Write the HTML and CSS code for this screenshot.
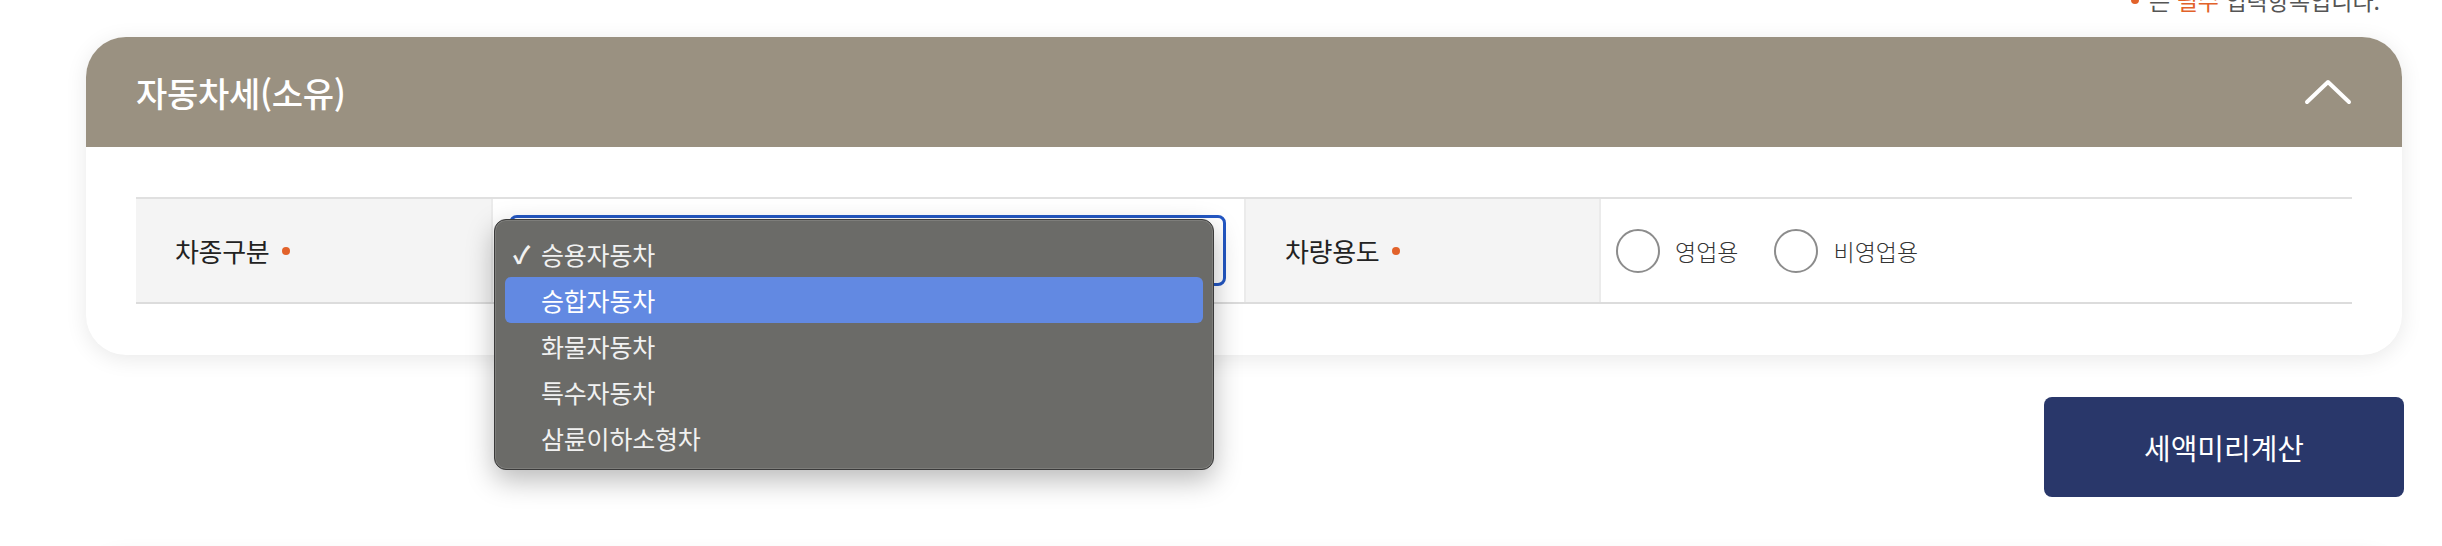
FILE: index.html
```html
<!DOCTYPE html>
<html lang="ko">
<head>
<meta charset="utf-8">
<title>자동차세(소유)</title>
<link rel="stylesheet" href="styles.css">
</head>
<body>
<div class="page">
  <div class="notice">
    <p class="notice-text"><span class="req-dot"></span> 는 <em>필수</em> 입력항목입니다.</p>
  </div>

  <section class="card">
    <header class="card-head">
      <h2 class="card-title">자동차세(소유)</h2>
      <svg class="chevron" width="48" height="26" viewBox="0 0 48 26" aria-hidden="true">
        <polyline points="3,23 24,3 45,23" fill="none" stroke="#ffffff" stroke-width="4" stroke-linecap="round" stroke-linejoin="round"/>
      </svg>
    </header>

    <div class="card-body">
      <div class="form-grid">
        <div class="cell label-cell">차종구분<span class="req-dot"></span></div>
        <div class="cell select-cell">
          <div class="select-box"></div>
          <ul class="popup">
            <li class="opt checked"><span class="check">✓</span>승용자동차</li>
            <li class="opt active">승합자동차</li>
            <li class="opt">화물자동차</li>
            <li class="opt">특수자동차</li>
            <li class="opt">삼륜이하소형차</li>
          </ul>
        </div>
        <div class="cell label-cell bordered">차량용도<span class="req-dot"></span></div>
        <div class="cell radio-cell bordered">
          <label class="radio"><span class="circle"></span>영업용</label>
          <label class="radio"><span class="circle"></span>비영업용</label>
        </div>
      </div>
    </div>
  </section>

  <div class="actions">
    <button class="calc-btn" type="button">세액미리계산</button>
  </div>

  <section class="card next-card"></section>
</div>
</body>
</html>
```

FILE: styles.css
```css
* { box-sizing: border-box; }

html, body {
  margin: 0;
  padding: 0;
  background: #ffffff;
  font-family: "Noto Sans CJK KR", "Noto Sans", sans-serif;
  color: #222;
}

.page {
  width: 2316px;
  margin-left: 86px;
}

/* notice line (clipped at top of viewport) */
.notice {
  height: 37px;
  display: flow-root;
}
.notice-text {
  margin: -11px 22px 0 0;
  text-align: right;
  font-size: 23px;
  line-height: 23px;
  color: #555;
  font-weight: 400;
}
.notice-text em {
  font-style: normal;
  color: #e2622a;
}
.notice-text .req-dot {
  margin: 0 4px 0 0;
  vertical-align: 6px;
}

.req-dot {
  display: inline-block;
  width: 8px;
  height: 8px;
  border-radius: 50%;
  background: #e2622a;
  margin-left: 13px;
  vertical-align: 5px;
}

/* card */
.card {
  background: #fff;
  border-radius: 40px;
  box-shadow: 0 4px 22px rgba(0, 0, 0, 0.09);
}

.card-head {
  height: 110px;
  background: #9a9181;
  border-radius: 40px 40px 0 0;
  display: flex;
  align-items: center;
  justify-content: space-between;
  padding: 0 50px 0 50px;
}
.card-title {
  margin: 0;
  font-size: 34px;
  font-weight: 500;
  color: #fff;
  letter-spacing: -0.3px;
}
.chevron { display: block; }

.card-body {
  padding: 50px 50px 51px;
}

.form-grid {
  display: grid;
  grid-template-columns: 355px 753px 355px 753px;
  border-top: 2px solid #e0e0e0;
  border-bottom: 2px solid #dcdcdc;
}
.cell {
  height: 103px;
  display: flex;
  align-items: center;
}
.bordered, .select-cell { border-left: 2px solid #ebebeb; }

.label-cell {
  background: #f4f4f4;
  padding-left: 39px;
  font-size: 26px;
  color: #222;
  letter-spacing: -0.3px;
}

.select-cell {
  position: relative;
  padding: 16px 18px 16px 16px;
}
.select-box {
  width: 100%;
  height: 71px;
  border: 3px solid #2357c3;
  border-radius: 8px;
}

/* native-like dropdown popup */
.popup {
  position: absolute;
  left: 1px;
  top: 20px;
  width: 720px;
  height: 251px;
  margin: 0;
  padding: 11px 10px 9px;
  list-style: none;
  background: #6b6b68;
  border: 1px solid #3a3a3a;
  border-radius: 12px;
  box-shadow: inset 0 0 0 1px rgba(255,255,255,0.12), 0 10px 28px rgba(0,0,0,0.28);
  z-index: 5;
}
.opt {
  position: relative;
  height: 46px;
  padding-left: 36px;
  display: flex;
  align-items: center;
  font-size: 25px;
  color: #f1f1f1;
  border-radius: 6px;
  letter-spacing: -0.2px;
}
.opt.active { background: #6289e2; color: #fff; }
.check {
  position: absolute;
  left: 8px;
  top: 50%;
  transform: translateY(-52%);
  font-size: 24px;
  font-weight: 700;
}

.radio-cell {
  padding-left: 15px;
  gap: 36px;
}
.radio {
  display: flex;
  align-items: center;
  gap: 15px;
  font-size: 23px;
  font-weight: 300;
  color: #333;
}
.circle {
  width: 44px;
  height: 44px;
  border: 2px solid #8c8c8c;
  border-radius: 50%;
  background: #fff;
}

.actions {
  display: flex;
  justify-content: flex-end;
  margin-top: 42px;
  margin-right: -2px;
}
.calc-btn {
  width: 360px;
  height: 100px;
  border: 0;
  border-radius: 8px;
  background: #29376a;
  color: #fff;
  font-family: inherit;
  font-size: 29px;
  font-weight: 400;
}

.next-card {
  margin-top: 56px;
  height: 200px;
}
```
